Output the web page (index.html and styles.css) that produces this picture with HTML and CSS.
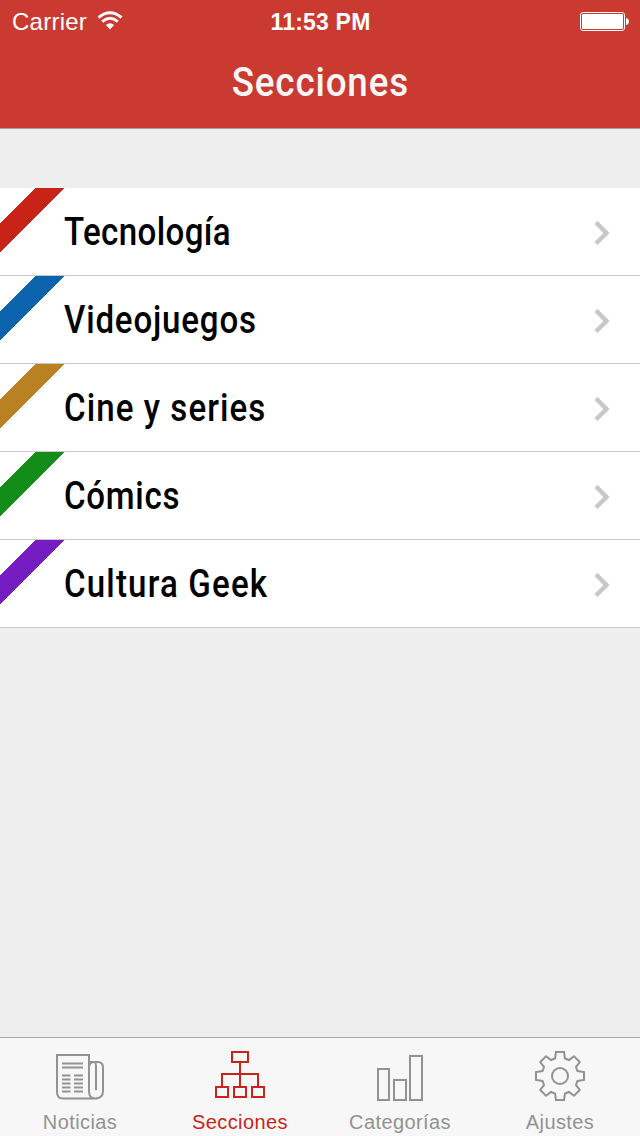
FILE: index.html
```html
<!DOCTYPE html>
<html lang="es">
<head>
<meta charset="utf-8">
<title>Secciones</title>
<link rel="stylesheet" href="styles.css">
</head>
<body>
<div class="app">
  <header class="header">
    <div class="status">
      <div class="carrier"><span class="carrier-name">Carrier</span>
        <svg class="wifi" width="26" height="20" viewBox="0 0 26 20"><g fill="none" stroke="#fff" stroke-width="3"><path d="M1.5 6.5Q13 -3 24.5 6.5"/><path d="M5.2 10.6Q13 4 20.8 10.6"/></g><path d="M8.9 14Q13 10.4 17.1 14L13 18.5Z" fill="#fff"/></svg>
      </div>
      <div class="clock">11:53 PM</div>
      <svg class="battery" width="50" height="20" viewBox="0 0 50 20"><rect x=".5" y="1.5" width="44" height="18" rx="2.5" fill="none" stroke="#fff"/><rect x="2" y="3" width="41" height="15" rx="1.2" fill="#fff"/><path d="M46 7q3 .5 3 3.5t-3 3.5z" fill="#fff"/></svg>
    </div>
    <h1 class="title"><span class="title-text">Secciones</span></h1>
  </header>
  <main class="content">
    <ul class="list">
      <li class="row tecnologia"><span class="label">Tecnología</span><svg class="chevron" width="18" height="26" viewBox="0 0 18 26"><path d="M3 2.5L13.5 13L3 23.5"/></svg></li>
      <li class="row videojuegos"><span class="label">Videojuegos</span><svg class="chevron" width="18" height="26" viewBox="0 0 18 26"><path d="M3 2.5L13.5 13L3 23.5"/></svg></li>
      <li class="row cine"><span class="label">Cine y series</span><svg class="chevron" width="18" height="26" viewBox="0 0 18 26"><path d="M3 2.5L13.5 13L3 23.5"/></svg></li>
      <li class="row comics"><span class="label">Cómics</span><svg class="chevron" width="18" height="26" viewBox="0 0 18 26"><path d="M3 2.5L13.5 13L3 23.5"/></svg></li>
      <li class="row cultura"><span class="label">Cultura Geek</span><svg class="chevron" width="18" height="26" viewBox="0 0 18 26"><path d="M3 2.5L13.5 13L3 23.5"/></svg></li>
    </ul>
  </main>
  <nav class="tabs">
    <a class="tab"><svg class="icon" width="52" height="52" viewBox="0 0 52 52"><path d="M43 48.5H9Q3 48.5 3 42V5H35V41Q35 48.5 41 48.5Q49 48.5 49 41V18Q49 12 44 12H35M35 18Q35 12 40 12Q42 12 42 17V40"/><path d="M8 13.5H29M8 17.5H29M8 25.5H16.5M8 29.5H16.5M8 33.5H16.5M8 37.5H16.5M8 41.5H16.5M20 25.5H29M20 29.5H29M20 33.5H29M20 37.5H29M20 41.5H29"/></svg><span class="tab-label">Noticias</span></a>
    <a class="tab active"><svg class="icon" width="52" height="52" viewBox="0 0 52 52"><path d="M18 2H34V12H18ZM26 12V37M8 37V24H44V37M2 37H14V47H2ZM20 37H32V47H20ZM38 37H50V47H38Z"/></svg><span class="tab-label">Secciones</span></a>
    <a class="tab"><svg class="icon" width="52" height="52" viewBox="0 0 52 52"><path d="M4 19H15V50H4ZM20 30H32V50H20ZM36 6H48V50H36Z"/></svg><span class="tab-label">Categorías</span></a>
    <a class="tab"><svg class="icon" width="52" height="52" viewBox="-26 -26 52 52"><path d="M-4-24H4L5-17.5L9-16L14-19.8L19.8-14L16-9L17.5-5L24-4V4L17.5 5L16 9L19.8 14L14 19.8L9 16L5 17.5L4 24H-4L-5 17.5L-9 16L-14 19.8L-19.8 14L-16 9L-17.5 5L-24 4V-4L-17.5-5L-16-9L-19.8-14L-14-19.8L-9-16L-5-17.5Z"/><circle r="8"/></svg><span class="tab-label">Ajustes</span></a>
  </nav>
</div>
</body>
</html>
```
FILE: styles.css
```css
* { box-sizing: border-box; }
body { margin: 0; font-family: "Liberation Sans", Arial, sans-serif; }
.app { width: 640px; height: 1136px; display: flex; flex-direction: column; background: #eee; overflow: hidden; }
.header { height: 129px; background: #cb3a30; border-bottom: 1px solid #a6a0a0; color: #fff; }
.status { height: 40px; display: grid; grid-template-columns: 1fr 1fr 1fr; align-items: center; padding: 0 10px 0 12px; }
.carrier { display: flex; align-items: center; gap: 10px; font-size: 24px; line-height: 40px; }
.carrier-name { letter-spacing: .25px; padding-top: 2px; }
.wifi { margin-top: -1px; }
.clock { text-align: center; font-size: 23px; font-weight: 700; line-height: 40px; padding-top: 2px; letter-spacing: .2px; margin-left: -1px; }
.battery { justify-self: end; margin-top: -1px; }
.title { margin: 0; height: 88px; display: flex; justify-content: center; align-items: center; font: 500 40px/84px Roboto, sans-serif; color: #f7f7f7; }
.title-text { display: inline-block; margin-top: -2px; letter-spacing: .9px; transform: scaleX(.92); }
.content { flex: 1; padding-top: 59px; }
.list { list-style: none; margin: 0; padding: 0; }
.row { height: 88px; display: flex; align-items: center; justify-content: space-between; padding: 0 29px 0 64px; border-bottom: 1px solid #c8c7cc; background: linear-gradient(135deg, #fff 25px, var(--ribbon) 25px, var(--ribbon) 45.7px, #fff 45.7px) 0 0 / 65px 65px no-repeat #fff; }
.tecnologia { --ribbon: #c72318; letter-spacing: .45px; }
.videojuegos { --ribbon: #0b64ab; letter-spacing: .95px; }
.cine { --ribbon: #b98024; letter-spacing: 1.25px; }
.comics { --ribbon: #138c18; letter-spacing: .85px; }
.cultura { --ribbon: #751dc2; letter-spacing: 1.35px; }
.label { font: 500 38px/86px Roboto, sans-serif; color: #000; transform: scaleX(.87); transform-origin: left; }
.chevron { fill: none; stroke: #c7c7cc; stroke-width: 4.5; margin-top: 2px; }
.tabs { height: 99px; display: grid; grid-template-columns: repeat(4, 1fr); background: #f7f7f7; border-top: 1px solid #a8a8a8; }
.tab { display: flex; flex-direction: column; align-items: center; padding-top: 12px; color: #929292; }
.active { color: #cb2318; }
.icon { fill: none; stroke: currentColor; stroke-width: 2; }
.tab-label { font-size: 20px; line-height: 24px; margin-top: 8px; letter-spacing: .4px; }
```
